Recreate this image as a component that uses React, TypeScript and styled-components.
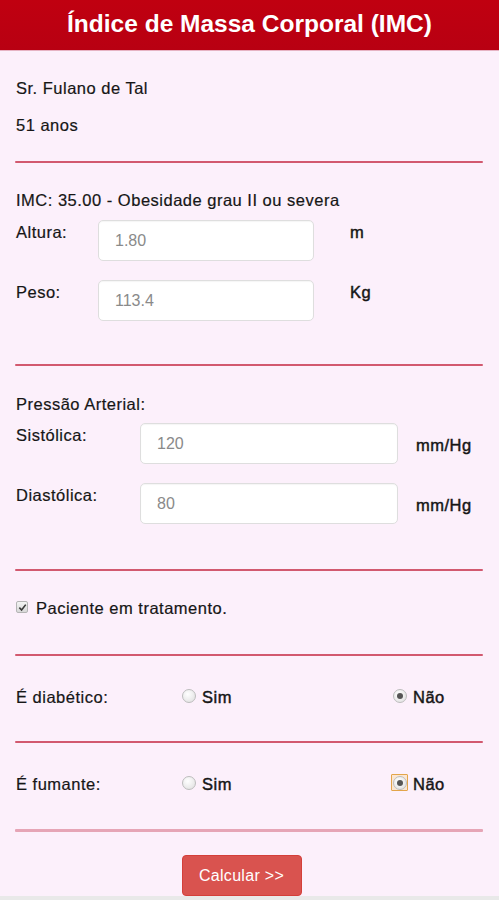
import React from 'react';
import styled, { createGlobalStyle } from 'styled-components';

const GlobalStyle = createGlobalStyle`
  html, body {
    margin: 0;
    padding: 0;
    background: #e9e9e9;
  }
  body {
    font-family: "Liberation Sans", Arial, sans-serif;
    color: #161616;
  }
  * {
    box-sizing: border-box;
  }
`;

interface RadioOption {
  label: string;
  checked: boolean;
  focused?: boolean;
}

interface MeasureRow {
  label: string;
  value: string;
  unit: string;
}

const bodyRows: MeasureRow[] = [
  { label: 'Altura:', value: '1.80', unit: 'm' },
  { label: 'Peso:', value: '113.4', unit: 'Kg' },
];

const pressureRows: MeasureRow[] = [
  { label: 'Sistólica:', value: '120', unit: 'mm/Hg' },
  { label: 'Diastólica:', value: '80', unit: 'mm/Hg' },
];

const Radio: React.FC<RadioOption> = ({ label, checked, focused }) => (
  <RadioLabel>
    <RadioFocus $focused={!!focused}>
      <RadioCircle $checked={checked} />
    </RadioFocus>
    {label}
  </RadioLabel>
);

const App: React.FC = () => {
  return (
    <Page>
      <GlobalStyle />
      <Header>Índice de Massa Corporal (IMC)</Header>

      <Content>
        <Block $top={27} $bottom={26}>
          <Line>Sr. Fulano de Tal</Line>
          <Line $gap={17}>51 anos</Line>
        </Block>
        <Divider />

        <Block $top={27} $bottom={43}>
          <Line>IMC: 35.00 - Obesidade grau II ou severa</Line>
          <Fields $top={10}>
            {bodyRows.map((row) => (
              <BodyRow key={row.label}>
                <FieldLabel>{row.label}</FieldLabel>
                <Input defaultValue={row.value} />
                <Unit>{row.unit}</Unit>
              </BodyRow>
            ))}
          </Fields>
        </Block>
        <Divider />

        <Block $top={28} $bottom={45}>
          <Line>Pressão Arterial:</Line>
          <Fields $top={9}>
            {pressureRows.map((row) => (
              <PressureRow key={row.label}>
                <FieldLabel>{row.label}</FieldLabel>
                <Input defaultValue={row.value} />
                <PressureUnit>{row.unit}</PressureUnit>
              </PressureRow>
            ))}
          </Fields>
        </Block>
        <Divider />

        <Block $top={27} $bottom={36}>
          <CheckRow>
            <CheckBox>
              <svg width="9" height="9" viewBox="0 0 10 10">
                <path d="M1.5 5.2 L4 7.8 L8.6 1.8" fill="none" stroke="#3a3a3a" strokeWidth="1.8" />
              </svg>
            </CheckBox>
            Paciente em tratamento.
          </CheckRow>
        </Block>
        <Divider />

        <Block $top={29} $bottom={34}>
          <RadioRow>
            <FieldLabel>É diabético:</FieldLabel>
            <Radio label="Sim" checked={false} />
            <Radio label="Não" checked />
          </RadioRow>
        </Block>
        <Divider />

        <Block $top={29} $bottom={35}>
          <RadioRow>
            <FieldLabel>É fumante:</FieldLabel>
            <Radio label="Sim" checked={false} />
            <Radio label="Não" checked focused />
          </RadioRow>
        </Block>
        <Divider $light />

        <Actions>
          <Button type="button">Calcular &gt;&gt;</Button>
        </Actions>
      </Content>
    </Page>
  );
};

export default App;

const Page = styled.div`
  width: 100%;
  height: 896px;
  background: #fcf0fb;
  overflow: hidden;
`;

const Header = styled.h1`
  margin: 0;
  height: 51px;
  padding-top: 9px;
  background: linear-gradient(#c00010, #b80012);
  border-bottom: 1px solid #e6b3c3;
  color: #fff;
  font-size: 24.5px;
  font-weight: bold;
  text-align: center;
  line-height: 30px;
`;

const Content = styled.div`
  padding: 0 16px 0 15px;
  font-size: 16.5px;
  letter-spacing: 0.5px;
  -webkit-text-stroke: 0.2px #161616;
`;

const Block = styled.div<{ $top: number; $bottom: number }>`
  padding-top: ${(p) => p.$top}px;
  padding-bottom: ${(p) => p.$bottom}px;
  padding-left: 1px;
`;

const Line = styled.div<{ $gap?: number }>`
  line-height: 20px;
  margin-top: ${(p) => p.$gap || 0}px;
`;

const Divider = styled.div<{ $light?: boolean }>`
  height: ${(p) => (p.$light ? 3 : 2)}px;
  background: ${(p) => (p.$light ? '#e6a5b6' : '#d2596f')};
  border-radius: 1px;
`;

const Fields = styled.div<{ $top: number }>`
  margin-top: ${(p) => p.$top}px;
  display: flex;
  flex-direction: column;
  gap: 19px;
`;

const BodyRow = styled.div`
  display: grid;
  grid-template-columns: 82px 216px auto;
  align-items: start;
`;

const PressureRow = styled.div`
  display: grid;
  grid-template-columns: 124px 258px auto;
  align-items: start;
`;

const FieldLabel = styled.div`
  line-height: 20px;
  padding-top: 2px;
`;

const Unit = styled.div`
  line-height: 20px;
  padding-top: 2px;
  margin-left: 36px;
  -webkit-text-stroke: 0.45px #161616;
`;

const PressureUnit = styled(Unit)`
  padding-top: 12px;
  margin-left: 18px;
`;

const Input = styled.input`
  height: 41px;
  width: 100%;
  border: 1px solid #dedede;
  border-radius: 5px;
  background: #fff;
  box-shadow: inset 0 1px 1px rgba(0, 0, 0, 0.04);
  padding: 0 16px;
  font-family: "Liberation Sans", Arial, sans-serif;
  font-size: 16px;
  color: #8a8a8a;
  -webkit-text-stroke: 0;
  outline: none;
`;

const CheckRow = styled.div`
  display: flex;
  align-items: center;
  gap: 8px;
  line-height: 20px;
`;

const CheckBox = styled.span`
  width: 12px;
  height: 12px;
  border: 1px solid #b5b5b5;
  border-radius: 2px;
  background: linear-gradient(#f4f4f4, #d8d8d8);
  display: flex;
  align-items: center;
  justify-content: center;
  margin-top: -2px;
`;

const RadioRow = styled.div`
  display: grid;
  grid-template-columns: 166px 211px auto;
  align-items: start;
`;

const RadioLabel = styled.label`
  display: flex;
  align-items: center;
  gap: 7px;
  line-height: 20px;
  padding-top: 2px;
  -webkit-text-stroke: 0.45px #161616;
`;

const RadioFocus = styled.span<{ $focused: boolean }>`
  width: 17px;
  height: 17px;
  display: flex;
  align-items: center;
  justify-content: center;
  margin-left: -2px;
  margin-right: -2px;
  margin-top: -3px;
  border: 1px solid ${(p) => (p.$focused ? '#e3a54a' : 'transparent')};
  background: ${(p) => (p.$focused ? '#fbe6d2' : 'transparent')};
  border-radius: 1px;
`;

const RadioCircle = styled.span<{ $checked: boolean }>`
  width: 14px;
  height: 14px;
  border-radius: 50%;
  border: 1px solid #bdbdbd;
  background: radial-gradient(circle at 40% 35%, #ffffff 0%, #e4e4e4 80%);
  display: flex;
  align-items: center;
  justify-content: center;

  &::after {
    content: '';
    width: 6px;
    height: 6px;
    border-radius: 50%;
    background: ${(p) => (p.$checked ? '#555' : 'transparent')};
  }
`;

const Actions = styled.div`
  display: flex;
  justify-content: center;
  padding-top: 23px;
  padding-right: 15px;
`;

const Button = styled.button`
  width: 120px;
  height: 41px;
  border: 1px solid #d43f3a;
  border-radius: 4px;
  background: #d9534f;
  color: #fff;
  -webkit-text-stroke: 0;
  font-family: "Liberation Sans", Arial, sans-serif;
  font-size: 16px;
  letter-spacing: 0.3px;
  cursor: pointer;
`;
